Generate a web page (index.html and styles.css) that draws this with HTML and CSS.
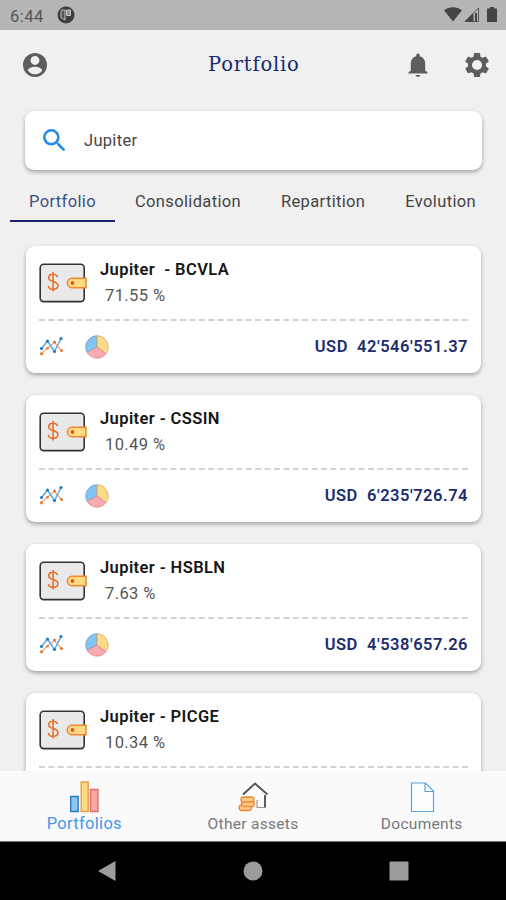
FILE: index.html
```html
<!DOCTYPE html>
<html lang="en">
<head>
<meta charset="utf-8">
<title>Portfolio</title>
<link rel="stylesheet" href="styles.css">
</head>
<body>
<svg class="defs" aria-hidden="true">
  <symbol id="wallet" viewBox="0 0 48 40">
    <rect x="1.2" y="1.2" width="44" height="37.4" rx="3.5" fill="#e9e9e9" stroke="#333" stroke-width="1.6"/>
    <path d="M18.5 14.2c-.4-2-2-3-4.400-3-2.700 0-4.400 1.400-4.400 3.600 0 5 9.200 2.600 9.200 7.800 0 2.300-1.900 3.700-4.700 3.700-2.700 0-4.500-1.200-4.900-3.500M14.100 9v19.500" fill="none" stroke="#e8702c" stroke-width="1.600"/>
    <path d="M47 15.300H33a4.700 4.700 0 0 0 0 9.400h14z" fill="#fddb84" stroke="#ee8634" stroke-width="1.500"/>
    <circle cx="33.500" cy="20" r="1.900" fill="#df5b1e"/>
  </symbol>
  <symbol id="trend" viewBox="0 0 26 22">
    <path d="M2.500 17.500l6-5.500 7-5.500 7 8" fill="none" stroke="#efab7c" stroke-width="1.200"/>
    <path d="M2.500 12.500l6-7.500 7 10.500L22 2.500" fill="none" stroke="#5aa8e2" stroke-width="1.500"/>
    <g fill="#e27a3a"><circle cx="2.500" cy="17.800" r="1.600"/><circle cx="8.500" cy="12.300" r="1.300"/><circle cx="15.500" cy="6" r="1.600"/><circle cx="22.500" cy="14.500" r="1.600"/></g>
    <g fill="#2478bd"><circle cx="2.500" cy="12.500" r="1.600"/><circle cx="8.500" cy="5" r="1.600"/><circle cx="15.500" cy="15.500" r="1.600"/><circle cx="22" cy="2.500" r="1.600"/></g>
  </symbol>
  <symbol id="pie" viewBox="0 0 24 24">
    <path d="M12 12V.8a11.200 11.200 0 0 0-9.900 16.500z" fill="#83c5f2" stroke="#5e9fca" stroke-width=".8"/>
    <path d="M12 12V.8a11.200 11.200 0 0 1 8.800 18z" fill="#fbdb89" stroke="#dfa55f" stroke-width=".8"/>
    <path d="M12 12l-9.900 5.300a11.200 11.200 0 0 0 18.700 1.500z" fill="#f8abb0" stroke="#d9868b" stroke-width=".8"/>
  </symbol>
</svg>
<div class="screen">
  <div class="status">
    <span class="clock">6:44</span>
    <svg class="badge" viewBox="0 0 18 18"><circle cx="9" cy="9" r="8.500" fill="#3e3e3e"/><path d="M5 4h3v10L4 11.500V5.500z" fill="#555" stroke="#c4c4c4" stroke-width="1"/><path d="M9.500 4h4v5.500h-4z" fill="#999" stroke="#c4c4c4" stroke-width="1"/></svg>
    <svg class="signals" viewBox="0 0 56 18"><path d="M2 4.200C7.200.3 14.800.3 20 4.200L11 15.500z" fill="#444"/><path d="M23 15.500L36.500 2v13.500z" fill="#b5b5b5" stroke="#555" stroke-width="1"/><path d="M23 15.500l8.500-8.500v8.500zM33 7h2v8.500h-2z" fill="#444"/><path d="M48 1h4v1.500h3v13.500h-10V2.500h3z" fill="#444"/></svg>
  </div>
  <header class="header">
    <svg class="user" viewBox="2 2 20 20"><path fill="#5d5d5d" d="M12 2a10 10 0 1 0 0 20 10 10 0 0 0 0-20zm0 2.500a3.700 3.700 0 1 1 0 7.400 3.700 3.700 0 0 1 0-7.400zm0 15.200c-2.500 0-4.700-1.200-6-3.100 0-2 4-3.100 6-3.100s6 1.100 6 3.100a7.200 7.200 0 0 1-6 3.100z"/></svg>
    <h1 class="title">Portfolio</h1>
    <svg class="bell" viewBox="4 2 16 20"><path fill="#5d5d5d" d="M12 22c1.100 0 2-.7 2-1.600h-4c0 .9.900 1.600 2 1.600zm6-5.500V11c0-3.100-1.600-5.600-4.500-6.300V4a1.500 1.500 0 0 0-3 0v.7C7.600 5.400 6 7.900 6 11v5.500l-2 1.700v.8h16v-.8z"/></svg>
    <svg class="gear" viewBox="2 2 20 20"><path fill="#5d5d5d" d="M19.430 12.980a7.800 7.800 0 0 0 0-1.960l2.110-1.650a.5.500 0 0 0 .12-.64l-2-3.460a.5.500 0 0 0-.61-.22l-2.490 1a7.300 7.300 0 0 0-1.690-.98l-.38-2.650A.49.490 0 0 0 14 2h-4a.49.490 0 0 0-.49.420l-.38 2.650c-.61.250-1.170.590-1.690.980l-2.490-1a.49.490 0 0 0-.61.220l-2 3.460a.49.490 0 0 0 .12.640l2.110 1.650a7.900 7.900 0 0 0 0 1.960l-2.110 1.650a.5.500 0 0 0-.12.640l2 3.460c.12.220.39.300.61.220l2.490-1c.52.400 1.080.730 1.690.980l.38 2.650c.03.240.24.420.49.420h4c.25 0 .46-.18.49-.42l.38-2.650a7.300 7.300 0 0 0 1.690-.98l2.490 1c.23.090.49 0 .61-.22l2-3.460a.5.500 0 0 0-.12-.64zM12 16.200a4.200 4.200 0 1 1 0-8.400 4.200 4.200 0 0 1 0 8.400z"/></svg>
  </header>
  <div class="search">
    <svg class="lens" viewBox="3 3 18 18"><path fill="#238ce8" d="M15.500 14h-.79l-.28-.27A6.470 6.470 0 0 0 16 9.500 6.500 6.500 0 1 0 9.500 16c1.610 0 3.090-.59 4.230-1.570l.27.280v.79l5 4.990L20.490 19zm-6 0a4.500 4.500 0 1 1 0-9 4.500 4.500 0 0 1 0 9z"/></svg>
    <span class="query">Jupiter</span>
  </div>
  <nav class="tabs">
    <span class="tab active">Portfolio</span>
    <span class="tab">Consolidation</span>
    <span class="tab">Repartition</span>
    <span class="tab">Evolution</span>
  </nav>
  <main class="list">
    <article class="card">
      <div class="top"><svg class="wallet"><use href="#wallet"/></svg><div><h2 class="name">Jupiter&nbsp; - BCVLA</h2><p class="share">71.55 %</p></div></div>
      <svg class="rule"><line x1="0" y1="1" x2="429" y2="1"/></svg>
      <div class="bottom"><svg class="trend"><use href="#trend"/></svg><svg class="pie"><use href="#pie"/></svg><span class="amount">USD&nbsp; 42'546'551.37</span></div>
    </article>
    <article class="card">
      <div class="top"><svg class="wallet"><use href="#wallet"/></svg><div><h2 class="name">Jupiter - CSSIN</h2><p class="share">10.49 %</p></div></div>
      <svg class="rule"><line x1="0" y1="1" x2="429" y2="1"/></svg>
      <div class="bottom"><svg class="trend"><use href="#trend"/></svg><svg class="pie"><use href="#pie"/></svg><span class="amount">USD&nbsp; 6'235'726.74</span></div>
    </article>
    <article class="card">
      <div class="top"><svg class="wallet"><use href="#wallet"/></svg><div><h2 class="name">Jupiter - HSBLN</h2><p class="share">7.63 %</p></div></div>
      <svg class="rule"><line x1="0" y1="1" x2="429" y2="1"/></svg>
      <div class="bottom"><svg class="trend"><use href="#trend"/></svg><svg class="pie"><use href="#pie"/></svg><span class="amount">USD&nbsp; 4'538'657.26</span></div>
    </article>
    <article class="card">
      <div class="top"><svg class="wallet"><use href="#wallet"/></svg><div><h2 class="name">Jupiter - PICGE</h2><p class="share">10.34 %</p></div></div>
      <svg class="rule"><line x1="0" y1="1" x2="429" y2="1"/></svg>
    </article>
  </main>
  <nav class="nav">
    <div class="item selected">
      <svg viewBox="0 0 32 34"><path d="M2.700 16.500h7.500v15H2.700z" fill="#8ac6ef" stroke="#2c7db9" stroke-width="1.400"/><path d="M13.200 2h7v29.500h-7z" fill="#fbdb85" stroke="#eb9c4c" stroke-width="1.400"/><path d="M22.500 9.500H30v22h-7.500z" fill="#f3a8a9" stroke="#de6f6b" stroke-width="1.400"/></svg>
      <span>Portfolios</span>
    </div>
    <div class="item">
      <svg viewBox="0 0 32 34"><path d="M20 20v7.500h8" fill="none" stroke="#999" stroke-width="1.200"/><path d="M28 15v12.500M6 14.500L18 3.500l12.500 11" fill="none" stroke="#555" stroke-width="1.900"/><g fill="#ffc98a" stroke="#e98b36" stroke-width="1.300"><rect x="2" y="25" width="12.500" height="5.500" rx="2.700"/><rect x="4.500" y="21" width="13" height="5.500" rx="2.700"/><rect x="4" y="17" width="13" height="5" rx="2.500"/></g></svg>
      <span>Other assets</span>
    </div>
    <div class="item">
      <svg viewBox="0 0 32 34"><path d="M5.500 3h14l8 8v20.500h-22zM19 3v8.500h8.500" fill="#fcfdff" stroke="#5ba4de" stroke-width="1.200"/></svg>
      <span>Documents</span>
    </div>
  </nav>
  <footer class="system">
    <svg viewBox="0 0 20 22"><path d="M1 11L18.500 1v20z"/></svg>
    <svg viewBox="0 0 20 22"><circle cx="10" cy="11" r="9.500"/></svg>
    <svg viewBox="0 0 20 22"><rect x=".5" y="1.500" width="19" height="19" rx="1"/></svg>
  </footer>
</div>
</body>
</html>
```
FILE: styles.css
```css
* { box-sizing: border-box; margin: 0; padding: 0; }
body { font-family: Roboto, "Liberation Sans", sans-serif; background: #f0f0f0; color: #444; }
svg { display: block; flex: none; }
.defs { display: none; }
.screen { width: 506px; height: 900px; display: flex; flex-direction: column; overflow: hidden; }
.status { height: 30px; flex: none; background: #b5b5b5; display: flex; align-items: center; padding: 0 8px 0 10px; }
.clock { font-size: 16.5px; color: #555; width: 47px; letter-spacing: .5px; padding-top: 2px; }
.badge { width: 18px; height: 18px; }
.signals { width: 56px; height: 18px; margin-left: auto; }
.header { height: 81px; flex: none; display: flex; align-items: center; padding: 0 17px 12px 23px; }
.user { width: 24px; height: 24px; }
.title { font: 400 19.500px "DejaVu Serif", serif; letter-spacing: .8px; color: #17296f; width: 91px; margin-left: 161px; white-space: nowrap; }
.bell { width: 20px; height: 24px; margin-left: auto; }
.gear { width: 24px; height: 24px; margin-left: 37px; }
.search { height: 59px; flex: none; margin: 0 24px 0 25px; background: #fff; border-radius: 9px; box-shadow: 0 2px 4px #0005; display: flex; align-items: center; padding-left: 18px; }
.lens { width: 23px; height: 23px; }
.query { font-size: 16.500px; margin-left: 18px; letter-spacing: .3px; }
.tabs { height: 52px; flex: none; display: flex; align-items: flex-start; padding: 12px 10px 0; }
.tab { height: 40px; line-height: 40px; font-size: 16.500px; letter-spacing: .35px; text-align: center; white-space: nowrap; padding: 0 20px; }
.tab.active { width: 105px; padding: 0; color: #3d5085; border-bottom: 2.500px solid #1c216b; }
.list { height: 549px; flex: none; overflow: hidden; padding: 24px 25px 0 26px; display: flex; flex-direction: column; gap: 22px; }
.card { height: 127px; flex: none; background: #fff; border-radius: 9px; box-shadow: 0 2px 4px #0005; padding: 0 13px; }
.top { height: 73px; display: flex; padding-top: 14px; gap: 13px; }
.wallet { width: 48px; height: 40px; margin-top: 3px; }
.name { font-size: 16.500px; line-height: 20px; font-weight: 600; letter-spacing: .4px; color: #151515; }
.share { font-size: 16.500px; line-height: 20px; letter-spacing: .4px; margin: 6px 0 0 5px; color: #555; }
.rule { width: 429px; height: 2px; stroke: #c5c5c5; stroke-width: 1.500; stroke-dasharray: 6 3.400; }
.bottom { display: flex; align-items: center; height: 51px; }
.trend { width: 26px; height: 22px; }
.pie { width: 24px; height: 24px; margin-left: 20px; }
.amount { margin-left: auto; font-size: 16.500px; font-weight: 600; color: #1c2d6c; letter-spacing: .5px; white-space: nowrap; }
.nav { height: 70px; flex: none; background: #fafafa; display: flex; }
.item { flex: 1; display: flex; flex-direction: column; align-items: center; padding-top: 9px; font-size: 15.500px; line-height: 20px; color: #777; letter-spacing: .3px; }
.item svg { width: 32px; height: 34px; }
.item.selected { color: #4496ea; font-size: 16.500px; }
.system { height: 59px; flex: none; background: #000; border-top: 1px solid #777; display: flex; justify-content: center; gap: 126px; padding-top: 18px; fill: #9c9c9c; }
.system svg { width: 20px; height: 22px; }
```
